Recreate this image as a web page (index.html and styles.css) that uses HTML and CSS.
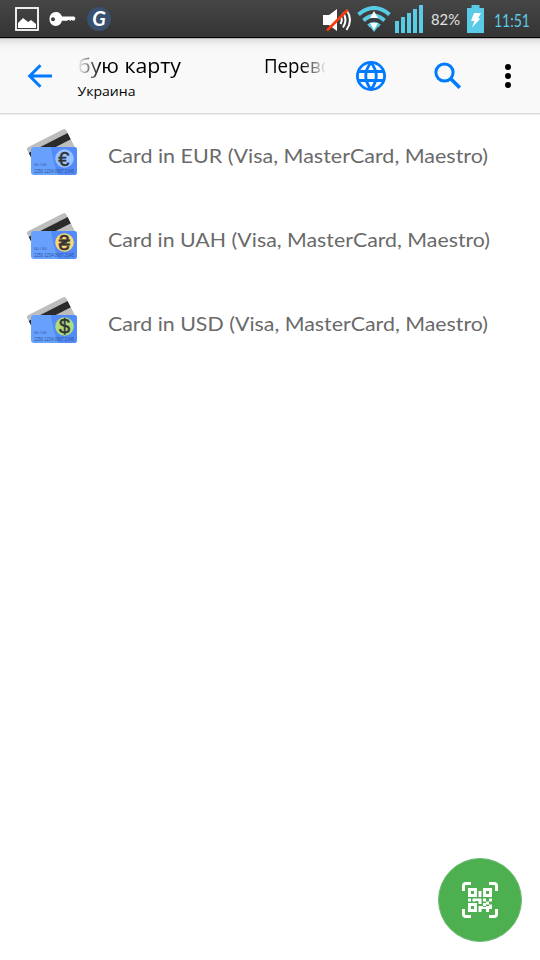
FILE: index.html
```
<!DOCTYPE html>
<html lang="ru">
<head>
<meta charset="utf-8">
<title>Украина</title>
<link rel="stylesheet" href="styles.css">
</head>
<body>
<svg class="defs" width="0" height="0">
  <defs>
    <clipPath id="back"><rect x="-22" y="-14" width="44" height="28" rx="3"/></clipPath>
    <clipPath id="front"><rect x="11" y="27" width="46" height="28" rx="3"/></clipPath>
    <g id="cards">
      <g transform="translate(32 30.500) rotate(-27)">
        <g clip-path="url(#back)">
          <rect x="-22" y="-14" width="44" height="28" fill="#bdbdbd"/>
          <rect x="-22" y="-8.500" width="44" height="7" fill="#2b2b2b"/>
        </g>
      </g>
      <g clip-path="url(#front)">
        <rect x="11" y="27" width="46" height="28" fill="#68a1fd"/>
        <path d="M31 27H57V55H38Q33 42 31 27z" fill="#528afa"/>
      </g>
      <text class="card-date" x="14" y="45.500" textLength="12.500" lengthAdjust="spacingAndGlyphs">00 / 00</text>
      <text class="card-num" x="14" y="53" textLength="40" lengthAdjust="spacingAndGlyphs">1250 1234 0987 2345</text>
    </g>
  </defs>
</svg>
<div class="status">
  <svg class="s-pic" width="24" height="24" viewBox="0 0 24 24"><rect x="1" y="1" width="22" height="22" fill="none" stroke="#fff" stroke-width="1.8"/><path d="M3 21V16L8 11L13 15L16 13L21 17V21z" fill="#fff"/></svg>
  <svg class="s-key" width="27" height="16" viewBox="0 0 27 16"><path fill="#fff" fill-rule="evenodd" d="M7 1C10 1 12 3 13 5.500H25L26.500 7L25.500 9.500H23.500L22.500 8.800L21.500 10L20 8.800L18 9.800H13C12 13 10 15 7 15C3 15 0.500 12 0.500 8S3 1 7 1zM4 6.200A2 2 0 1 0 4 10.200A2 2 0 1 0 4 6.200z"/></svg>
  <span class="s-g">G</span>
  <span class="grow"></span>
  <svg class="s-mute" width="29" height="26" viewBox="0 0 29 26"><path d="M0 8H6L14 2V24L6 18H0z" fill="#fff"/><path d="M17.500 9Q20 13 17.500 17M20 5.500Q25 13 20 20.500M23.500 3Q30.500 13 23.500 23" fill="none" stroke="#fff" stroke-width="2"/><path d="M4 23.500L24.500 3" stroke="#f8390c" stroke-width="2.600"/></svg>
  <svg class="s-wifi" width="34" height="28" viewBox="0 0 34 28"><path d="M1.500 8.500Q17 -4.500 32.500 8.500M6.500 14.500Q17 5 27.500 14.500M11.500 20Q17 15.500 22.500 20" fill="none" stroke="#5acbe6" stroke-width="4"/><path d="M12.500 20H21.500L17 26z" fill="#5acbe6"/><path d="M17 5L21 12H13zM17 24L13 17H21z" fill="#fff"/></svg>
  <svg class="s-signal" width="28" height="28" viewBox="0 0 28 28"><path fill="#5acbe6" d="M0 16h4v12H0zM6 12h4v16H6zM12 8h4v20h-4zM18 4h4v24h-4zM24 0h4v28h-4z"/></svg>
  <svg class="s-pct" width="30" height="20"><text x="0" y="16" textLength="29" lengthAdjust="spacingAndGlyphs">82%</text></svg>
  <svg class="s-batt" width="17" height="28" viewBox="0 0 17 28"><path d="M4.500 0H12.500V3H17V28H0V3H4.500z" fill="#5acbe6"/><path d="M7 8H14L11 13.500H13.500L5 22.500L7.500 16H4z" fill="#fff"/></svg>
  <svg class="s-time" width="38" height="28"><text x="0" y="20.500" textLength="36" lengthAdjust="spacingAndGlyphs">11:51</text></svg>
</div>
<header class="bar">
  <svg class="b-arrow" width="26" height="24" viewBox="0 0 26 24"><path d="M25 12H3M13.500 1.200L2.700 12L13.500 22.800" fill="none" stroke="#007aff" stroke-width="3"/></svg>
  <div class="titles">
    <svg class="title" width="248" height="30"><text x="1" y="21" textLength="103" lengthAdjust="spacingAndGlyphs">бую карту</text><text x="187" y="21" textLength="68" lengthAdjust="spacingAndGlyphs">Перево</text></svg>
    <svg class="sub" width="70" height="20"><text x="0.500" y="14" textLength="58" lengthAdjust="spacingAndGlyphs">Украина</text></svg>
  </div>
  <svg class="b-globe" width="30" height="30" viewBox="0 0 30 30"><g fill="none" stroke="#007aff" stroke-width="2.800"><circle cx="15" cy="15" r="13.600"/><path d="M2 10.500H28M2 19.500H28M15 1.500Q4.500 15 15 28.500Q25.500 15 15 1.500z"/></g></svg>
  <svg class="b-search" width="28" height="28" viewBox="0 0 28 28"><circle cx="10.500" cy="10.500" r="8.600" fill="none" stroke="#007aff" stroke-width="3"/><path d="M16.500 16.500L25.800 25.800" stroke="#007aff" stroke-width="3.600"/></svg>
  <svg class="b-more" width="6" height="24" viewBox="0 0 6 24"><g fill="#000"><circle cx="3" cy="3" r="3"/><circle cx="3" cy="12" r="3"/><circle cx="3" cy="21" r="3"/></g></svg>
</header>
<main class="list">
  <div class="row">
    <svg class="card" width="70" height="64"><use href="#cards"/><circle cx="44.500" cy="38.500" r="9.300" fill="#99c4ff"/><text class="sign" x="43.800" y="45.500">€</text></svg>
    <svg class="label" width="390" height="32"><text x="0" y="23" textLength="380" lengthAdjust="spacingAndGlyphs">Card in EUR (Visa, MasterCard, Maestro)</text></svg>
  </div>
  <div class="row">
    <svg class="card" width="70" height="64"><use href="#cards"/><circle cx="44.500" cy="38.500" r="9.300" fill="#fad674"/><text class="sign" x="44.300" y="45.500">₴</text></svg>
    <svg class="label" width="390" height="32"><text x="0" y="23" textLength="382" lengthAdjust="spacingAndGlyphs">Card in UAH (Visa, MasterCard, Maestro)</text></svg>
  </div>
  <div class="row">
    <svg class="card" width="70" height="64"><use href="#cards"/><circle cx="44.500" cy="38.500" r="9.300" fill="#aede7b"/><text class="sign" x="44.500" y="45">$</text></svg>
    <svg class="label" width="390" height="32"><text x="0" y="23" textLength="380" lengthAdjust="spacingAndGlyphs">Card in USD (Visa, MasterCard, Maestro)</text></svg>
  </div>
</main>
<div class="fab">
  <svg width="36" height="36" viewBox="0 0 36 36"><path d="M1.500 9V4Q1.500 1.500 4 1.500H9M27 1.500H32Q34.500 1.500 34.500 4V9M34.500 27V32Q34.500 34.500 32 34.500H27M9 34.500H4Q1.500 34.500 1.500 32V27" fill="none" stroke="#fff" stroke-width="3"/><path fill="#fff" fill-rule="evenodd" d="M6 6h9v9H6zM9 9v3h3V9zM21 6h9v9h-9zM24 9v3h3V9zM6 21h9v9H6zM9 24v3h3v-3zM16.500 9h3v6h-3zM6 16.500h3v3H6zM10.500 16.500h3v3h-3zM13.500 16.500h6v5.500h-3v-3h-3zM21 16.500h3v3h-3zM27 16.500h3v3h-3zM24 19.500h3v3h-3zM16.500 24h4.500v3h-1.500v3h-3zM21 21h3v3h-3zM27 22.500h3v4.500h-3zM24 24h3v3h-3zM24 27h3v3h-3zM21 25h3v2h-3z"/></svg>
</div>
</body>
</html>
```
FILE: styles.css
```
* { box-sizing: border-box; }
body {
  margin: 0;
  height: 960px;
  overflow: hidden;
  background: #fff;
  font-family: "Lato", "Noto Sans", sans-serif;
}
svg { display: block; flex: none; }
.defs { position: absolute; }
.status {
  display: flex;
  align-items: center;
  height: 38px;
  padding: 0 8px 0 15px;
  background: linear-gradient(#464646, #343434);
  border-bottom: 1px solid #000;
}
.grow { flex: 1; }
.s-key { margin-left: 10px; }
.s-g {
  width: 24px;
  height: 24px;
  margin-left: 11px;
  border-radius: 50%;
  background: #39506f;
  color: #fff;
  font: italic bold 20px/23px "Lato", sans-serif;
  text-align: center;
}
.s-mute { margin-top: 2px; }
.s-wifi { margin-left: 5px; margin-top: 2px; }
.s-signal { margin-left: 4px; }
.s-pct { margin-left: 8px; fill: #e2e2e2; font-size: 16px; }
.s-batt { margin-left: 6px; }
.s-time { margin-left: 10px; margin-top: 2px; fill: #5acbe6; font-size: 18px; }
.bar {
  display: flex;
  align-items: center;
  height: 76px;
  padding-left: 27px;
  background: linear-gradient(#dedede, #f3f3f3 6px, #f9f9f9 14px);
  border-top: 1px solid #b4b4b4;
  border-bottom: 1px solid #dadada;
  box-shadow: 0 1px 1px #eee;
}
.titles { width: 248px; height: 60px; margin-left: 24px; }
.title {
  margin-top: 6px;
  font: 20px "Open Sans", sans-serif;
  mask-image: linear-gradient(to right, transparent, #000 24px, #000 224px, transparent 250px);
}
.sub { font: 13px "Open Sans", sans-serif; }
.b-globe { margin-left: 31px; }
.b-search { margin-left: 48px; }
.b-more { margin-left: 43px; }
.row {
  display: flex;
  align-items: center;
  height: 84px;
  padding-left: 20px;
}
.card { margin-top: -8px; }
.card-date, .card-num { fill: #2f5496; font: 4px "Liberation Sans", sans-serif; }
.card-num { font-size: 4.5px; }
.sign {
  fill: #343434;
  stroke: #343434;
  stroke-width: 0.5px;
  font: 20px "Liberation Sans", "DejaVu Sans", sans-serif;
  text-anchor: middle;
}
.label { margin-left: 18px; fill: #6a6a6a; font-size: 20px; }
.fab {
  position: absolute;
  right: 18px;
  bottom: 18px;
  display: flex;
  align-items: center;
  justify-content: center;
  width: 84px;
  height: 84px;
  border: 1px solid #70ba73;
  border-radius: 50%;
  background: #4caf50;
}
```
